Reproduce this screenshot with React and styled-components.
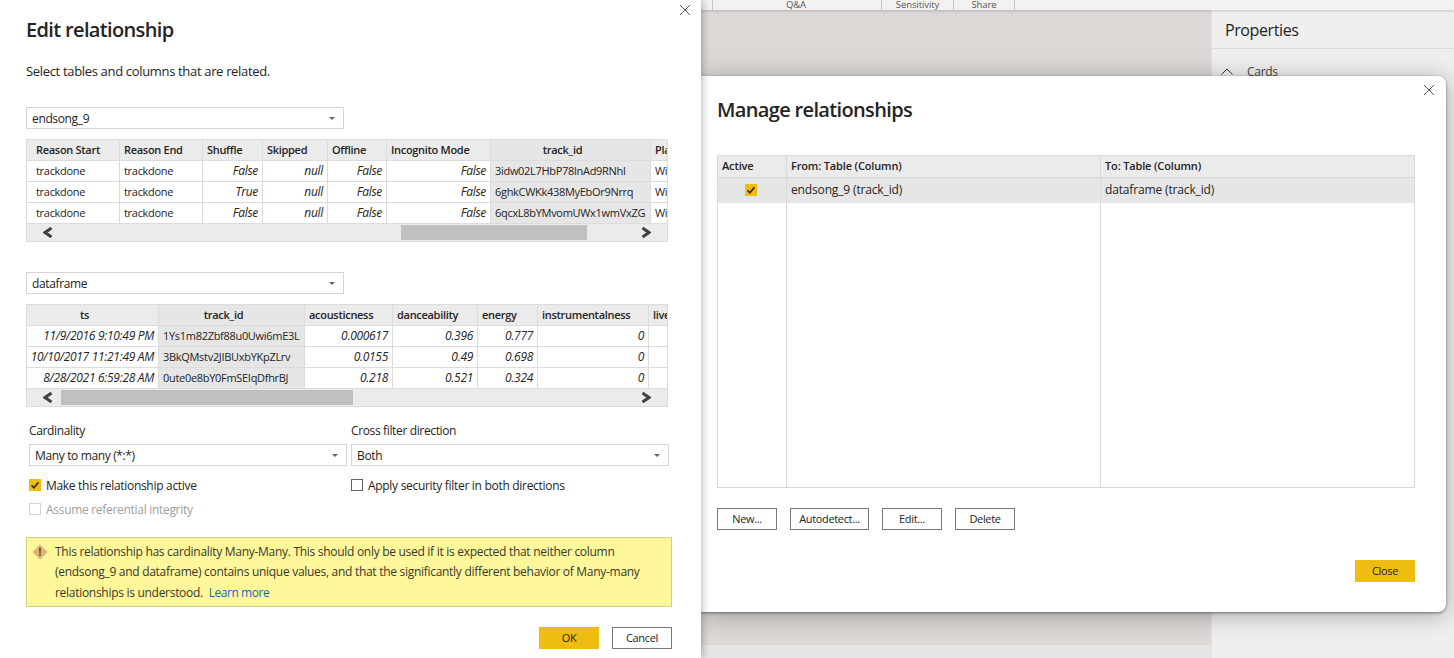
import React from "react";
import styled, { createGlobalStyle } from "styled-components";

const Global = createGlobalStyle`
  html, body { margin: 0; padding: 0; background: #fff; }
  body { font-family: "Open Sans", "Noto Sans", sans-serif; color: #252423; }
  * { box-sizing: border-box; }
`;

const Page = styled.div`
  position: relative;
  display: flex;
  width: 1454px;
  height: 658px;
  overflow: hidden;
`;

/* ---------- Left dialog ---------- */
const EditDialog = styled.section`
  position: relative;
  z-index: 3;
  flex: 0 0 701px;
  display: flex;
  flex-direction: column;
  padding: 16px 0 0 26px;
  background: #fff;
  box-shadow: 1px 0 8px rgba(0, 0, 0, 0.3);
`;
const CloseX = styled.button`
  position: absolute;
  top: ${(p) => p.$top}px;
  right: ${(p) => p.$right}px;
  width: 12px;
  height: 12px;
  padding: 0;
  border: 0;
  background: none;
  display: block;
  color: #555;
  svg { display: block; }
`;
const Title = styled.h1`
  margin: 0;
  height: 28px;
  line-height: 28px;
  font-size: 20px;
  font-weight: 600;
  letter-spacing: -0.65px;
  color: #252423;
`;
const Subtitle = styled.p`
  margin: 17px 0 0;
  height: 20px;
  line-height: 20px;
  font-size: 13px;
  letter-spacing: -0.33px;
`;
const SelectBox = styled.div`
  display: flex;
  align-items: center;
  justify-content: space-between;
  width: 318px;
  height: 22px;
  margin-top: ${(p) => p.$mt || 0}px;
  padding: 0 8px 0 5px;
  border: 1px solid #d4d4d4;
  font-size: 12px;
  letter-spacing: -0.36px;
  background: #fff;
`;
const Caret = styled.i`
  display: block;
  width: 0;
  height: 0;
  border-left: 3px solid transparent;
  border-right: 3px solid transparent;
  border-top: 3px solid #666;
`;
const Preview = styled.div`
  width: 642px;
  margin-top: 10px;
  border: 1px solid #dcdcdc;
`;
const PreviewGrid = styled.div`
  display: grid;
  grid-template-columns: ${(p) => p.$cols};
  grid-auto-rows: 21px;
`;
const Cell = styled.div`
  display: flex;
  align-items: center;
  justify-content: ${(p) => (p.$right ? "flex-end" : "flex-start")};
  padding: 0 4px 2px;
  border-right: 1px solid #dcdcdc;
  border-bottom: 1px solid #dcdcdc;
  font-size: ${(p) => (p.$right ? 12 : 11)}px;
  letter-spacing: -0.3px;
  font-style: ${(p) => (p.$right ? "italic" : "normal")};
  white-space: nowrap;
  overflow: hidden;
  background: ${(p) => (p.$key ? "#e6e6e6" : "#fff")};
  &:nth-child(${(p) => p.$n}n) { border-right: 0; }
`;
const HeadCell = styled(Cell)`
  font-size: 11px;
  font-weight: 600;
  font-style: normal;
  justify-content: ${(p) => (p.$center ? "center" : "flex-start")};
  padding-right: ${(p) => (p.$center ? 20 : 4)}px;
  padding-bottom: 1px;
  background: ${(p) => (p.$key ? "#e6e6e6" : "#ebebeb")};
`;
const Scrollbar = styled.div`
  display: flex;
  align-items: center;
  height: 17px;
  background: #ebebeb;
`;
const ScrollArrow = styled.div`
  flex: 0 0 34px;
  display: flex;
  justify-content: ${(p) => (p.$end ? "flex-start" : "flex-end")};
  padding: ${(p) => (p.$end ? "0 0 0 8px" : "0 8px 0 0")};
  svg { display: block; }
`;
const Track = styled.div`
  flex: 1;
  height: 15px;
`;
const Thumb = styled.div`
  height: 15px;
  margin-left: ${(p) => p.$left}px;
  width: ${(p) => p.$width}px;
  background: #c0c0c0;
`;
const FormGrid = styled.div`
  display: grid;
  grid-template-columns: 318px 318px;
  column-gap: 4px;
  margin: 16px 0 0 3px;
`;
const FieldLabel = styled.label`
  display: block;
  height: 16px;
  line-height: 16px;
  font-size: 12px;
  letter-spacing: -0.36px;
  margin-bottom: 5px;
`;
const CheckRow = styled.div`
  display: flex;
  align-items: center;
  gap: 5px;
  height: 20px;
  margin-top: ${(p) => p.$mt}px;
  font-size: 12px;
  letter-spacing: -0.3px;
  color: ${(p) => (p.$off ? "#a19f9d" : "#252423")};
`;
const CheckMark = styled.span`
  flex: 0 0 12px;
  width: 12px;
  height: 12px;
  display: block;
  background: ${(p) => (p.$on ? "#efbc11" : "#fff")};
  border: ${(p) => (p.$on ? "0" : p.$off ? "1px solid #d4d4d4" : "1px solid #666")};
  svg { display: block; }
`;
const Warning = styled.div`
  display: flex;
  gap: 7px;
  width: 646px;
  height: 70px;
  margin-top: 18px;
  padding: 4px 5px 0 5px;
  background: #fff89b;
  border: 1px solid #d4d07a;
  font-size: 12px;
  line-height: 20.4px;
  letter-spacing: -0.29px;
  color: #3a372c;
  svg { flex: none; margin-top: 2px; display: block; }
`;
const LearnMore = styled.a`
  color: #2064c4;
  margin-left: 3px;
  letter-spacing: -0.45px;
`;
const FooterRow = styled.div`
  display: flex;
  justify-content: flex-end;
  gap: 13px;
  width: 646px;
  margin-top: 20px;
`;
const Btn = styled.button`
  height: 22px;
  width: ${(p) => p.$w || 60}px;
  padding: 0 0 2px;
  font-family: inherit;
  font-size: 11px;
  letter-spacing: -0.35px;
  color: #252423;
  background: ${(p) => (p.$primary ? "#efbc11" : "#fff")};
  border: ${(p) => (p.$primary ? "0" : "1px solid #777")};
`;

/* ---------- Backdrop (report canvas) ---------- */
const Backdrop = styled.div`
  flex: 1;
  display: flex;
  flex-direction: column;
  min-width: 0;
`;
const Ribbon = styled.div`
  flex: 0 0 10px;
  display: flex;
  padding-left: 11px;
  background: #f3f2f1;
  overflow: hidden;
  position: relative;
  z-index: 1;
  box-shadow: 0 1px 3px rgba(0, 0, 0, 0.18);
`;
const RibbonGroup = styled.div`
  width: ${(p) => p.$w}px;
  height: 10px;
  padding-right: ${(p) => p.$shift || 0}px;
  border-left: 1px solid #c8c6c4;
  border-right: ${(p) => (p.$last ? "1px solid #c8c6c4" : "0")};
  font-size: 9.5px;
  line-height: 9px;
  text-align: center;
  color: #555;
  letter-spacing: -0.1px;
`;
const Workspace = styled.div`
  flex: 1;
  display: flex;
  min-height: 0;
`;
const Canvas = styled.div`
  flex: 0 0 510px;
  display: flex;
  flex-direction: column;
  background: #dbd8d5;
`;
const CanvasFill = styled.div`
  flex: 1;
`;
const CanvasTabs = styled.div`
  flex: 0 0 13px;
  background: #e5e5e5;
`;
const PropertiesPane = styled.aside`
  flex: 1;
  background: #f0efee;
  border-left: 1px solid #e3e1df;
`;
const PaneHead = styled.div`
  height: 39px;
  padding: 2px 0 0 13px;
  display: flex;
  align-items: center;
  border-bottom: 1px solid #dedcda;
  font-size: 16px;
  font-weight: 500;
  letter-spacing: -0.4px;
  color: #201f1e;
`;
const PaneRow = styled.div`
  display: flex;
  align-items: center;
  gap: 14px;
  padding: 14px 0 0 9px;
  font-size: 12px;
  letter-spacing: -0.3px;
  color: #444;
  svg { display: block; }
`;

/* ---------- Manage window ---------- */
const ManageWindow = styled.section`
  position: absolute;
  z-index: 2;
  left: 701px;
  top: 76px;
  width: 745px;
  height: 536px;
  padding: 20px 31px 0 16px;
  background: #fff;
  border-radius: 0 8px 8px 0;
  box-shadow: 0 1px 3px rgba(0, 0, 0, 0.45), 0 3px 24px rgba(0, 0, 0, 0.3);
`;
const ManageTable = styled.div`
  display: grid;
  grid-template-columns: 69px 314px 1fr;
  grid-template-rows: 22px 25px 1fr;
  height: 333px;
  margin-top: 31px;
  border: 1px solid #d9d9d9;
`;
const MCell = styled.div`
  display: flex;
  align-items: center;
  justify-content: ${(p) => (p.$center ? "center" : "flex-start")};
  padding: ${(p) => (p.$center ? "0 6px 2px 4px" : "0 4px 2px")};
  letter-spacing: -0.15px;
  font-weight: ${(p) => (p.$head ? 600 : 400)};
  font-size: ${(p) => (p.$head ? 11 : 12)}px;
  background: ${(p) => (p.$head ? "#ebebeb" : p.$sel ? "#e6e6e6" : "#fff")};
  border-right: ${(p) => (p.$last ? "0" : "1px solid #d9d9d9")};
  border-bottom: ${(p) => (p.$head ? "1px solid #d9d9d9" : "0")};
`;
const ActionRow = styled.div`
  display: flex;
  gap: 13px;
  margin-top: 20px;
`;
const CloseRow = styled.div`
  display: flex;
  justify-content: flex-end;
  margin-top: 30px;
`;

/* ---------- Icons ---------- */
const X = () => (
  <svg width="12" height="12" viewBox="0 0 12 12" fill="none" stroke="currentColor" strokeWidth="1">
    <path d="M1 1l10 10M11 1L1 11" />
  </svg>
);
const Chevron = ({ right }) => (
  <svg width="10" height="11" viewBox="0 0 10 11" fill="none" stroke="#404040" strokeWidth="3">
    <path d={right ? "M1.5 1l6.5 4.5L1.5 10" : "M8.5 1L2 5.5 8.5 10"} />
  </svg>
);
const Check = () => (
  <svg width="12" height="12" viewBox="0 0 12 12" fill="none" stroke="#2b2715" strokeWidth="1.6">
    <path d="M2.5 6.2l2.4 2.6 4.6-5.6" />
  </svg>
);
const WarnIcon = () => (
  <svg width="16" height="16" viewBox="0 0 16 16">
    <path d="M8 0.5L15.5 8 8 15.5 0.5 8z" fill="#e2b273" />
    <path d="M7.2 3.8h1.6l-.2 5.6H7.4z" fill="#4a3a20" />
    <rect x="7.2" y="10.3" width="1.6" height="1.6" fill="#4a3a20" />
  </svg>
);
const ChevronUp = () => (
  <svg width="12" height="7" viewBox="0 0 12 7" fill="none" stroke="#333" strokeWidth="1">
    <path d="M0.5 6.5L6 1l5.5 5.5" />
  </svg>
);

/* ---------- Data ---------- */
const table1 = {
  cols: "5px 88px 83px 60px 65px 59px 104px 160px 1fr",
  head: ["", "Reason Start", "Reason End", "Shuffle", "Skipped", "Offline", "Incognito Mode", "track_id", "Pla"],
  keyCol: 7,
  centerCols: [7],
  rows: [
    ["", "trackdone", "trackdone", "False", "null", "False", "False", "3idw02L7HbP78lnAd9RNhl", "Wi"],
    ["", "trackdone", "trackdone", "True", "null", "False", "False", "6ghkCWKk438MyEbOr9Nrrq", "Wi"],
    ["", "trackdone", "trackdone", "False", "null", "False", "False", "6qcxL8bYMvomUWx1wmVxZG", "Wi"],
  ],
  rightCols: [3, 4, 5, 6],
};
const table2 = {
  cols: "132px 146px 88px 85px 60px 111px 1fr",
  head: ["ts", "track_id", "acousticness", "danceability", "energy", "instrumentalness", "live"],
  keyCol: 1,
  centerCols: [0, 1],
  rows: [
    ["11/9/2016 9:10:49 PM", "1Ys1m82Zbf88u0Uwi6mE3L", "0.000617", "0.396", "0.777", "0", ""],
    ["10/10/2017 11:21:49 AM", "3BkQMstv2JIBUxbYKpZLrv", "0.0155", "0.49", "0.698", "0", ""],
    ["8/28/2021 6:59:28 AM", "0ute0e8bY0FmSEIqDfhrBJ", "0.218", "0.521", "0.324", "0", ""],
  ],
  rightCols: [0, 2, 3, 4, 5, 6],
};

const PreviewTable = ({ data, thumbLeft, thumbWidth }) => (
  <Preview>
    <PreviewGrid $cols={data.cols}>
      {data.head.map((h, i) => (
        <HeadCell key={i} $n={data.head.length} $key={i === data.keyCol} $center={data.centerCols.includes(i)}>
          {h}
        </HeadCell>
      ))}
      {data.rows.flatMap((r, ri) =>
        r.map((v, i) => (
          <Cell key={`${ri}-${i}`} $n={data.head.length} $key={i === data.keyCol} $right={data.rightCols.includes(i)}>
            {v}
          </Cell>
        ))
      )}
    </PreviewGrid>
    <Scrollbar>
      <ScrollArrow><Chevron /></ScrollArrow>
      <Track><Thumb $left={thumbLeft} $width={thumbWidth} /></Track>
      <ScrollArrow $end><Chevron right /></ScrollArrow>
    </Scrollbar>
  </Preview>
);

export default function App() {
  return (
    <Page>
      <Global />
      <EditDialog>
        <CloseX $top={4} $right={10}><X /></CloseX>
        <Title>Edit relationship</Title>
        <Subtitle>Select tables and columns that are related.</Subtitle>
        <SelectBox $mt={26}>endsong_9<Caret /></SelectBox>
        <PreviewTable data={table1} thumbLeft={340} thumbWidth={186} />
        <SelectBox $mt={30}>dataframe<Caret /></SelectBox>
        <PreviewTable data={table2} thumbLeft={0} thumbWidth={292} />
        <FormGrid>
          <div>
            <FieldLabel>Cardinality</FieldLabel>
            <SelectBox>Many to many (*:*)<Caret /></SelectBox>
            <CheckRow $mt={9}><CheckMark $on><Check /></CheckMark>Make this relationship active</CheckRow>
            <CheckRow $mt={4} $off><CheckMark $off />Assume referential integrity</CheckRow>
          </div>
          <div>
            <FieldLabel>Cross filter direction</FieldLabel>
            <SelectBox>Both<Caret /></SelectBox>
            <CheckRow $mt={9}><CheckMark />Apply security filter in both directions</CheckRow>
          </div>
        </FormGrid>
        <Warning>
          <WarnIcon />
          <div>
            This relationship has cardinality Many-Many. This should only be used if it is expected that neither column
            <br />
            (endsong_9 and dataframe) contains unique values, and that the significantly different behavior of Many-many
            <br />
            relationships is understood. <LearnMore>Learn more</LearnMore>
          </div>
        </Warning>
        <FooterRow>
          <Btn $primary>OK</Btn>
          <Btn>Cancel</Btn>
        </FooterRow>
      </EditDialog>

      <Backdrop>
        <Ribbon>
          <RibbonGroup $w={169} $shift={2}>Q&amp;A</RibbonGroup>
          <RibbonGroup $w={72}>Sensitivity</RibbonGroup>
          <RibbonGroup $w={62} $last>Share</RibbonGroup>
        </Ribbon>
        <Workspace>
          <Canvas>
            <CanvasFill />
            <CanvasTabs />
          </Canvas>
          <PropertiesPane>
            <PaneHead>Properties</PaneHead>
            <PaneRow><ChevronUp />Cards</PaneRow>
          </PropertiesPane>
        </Workspace>
      </Backdrop>

      <ManageWindow>
        <CloseX $top={8} $right={11}><X /></CloseX>
        <Title>Manage relationships</Title>
        <ManageTable>
          <MCell $head>Active</MCell>
          <MCell $head>From: Table (Column)</MCell>
          <MCell $head $last>To: Table (Column)</MCell>
          <MCell $sel $center><CheckMark $on><Check /></CheckMark></MCell>
          <MCell $sel>endsong_9 (track_id)</MCell>
          <MCell $sel $last>dataframe (track_id)</MCell>
          <MCell />
          <MCell />
          <MCell $last />
        </ManageTable>
        <ActionRow>
          <Btn>New...</Btn>
          <Btn $w={79}>Autodetect...</Btn>
          <Btn>Edit...</Btn>
          <Btn>Delete</Btn>
        </ActionRow>
        <CloseRow>
          <Btn $primary>Close</Btn>
        </CloseRow>
      </ManageWindow>
    </Page>
  );
}
